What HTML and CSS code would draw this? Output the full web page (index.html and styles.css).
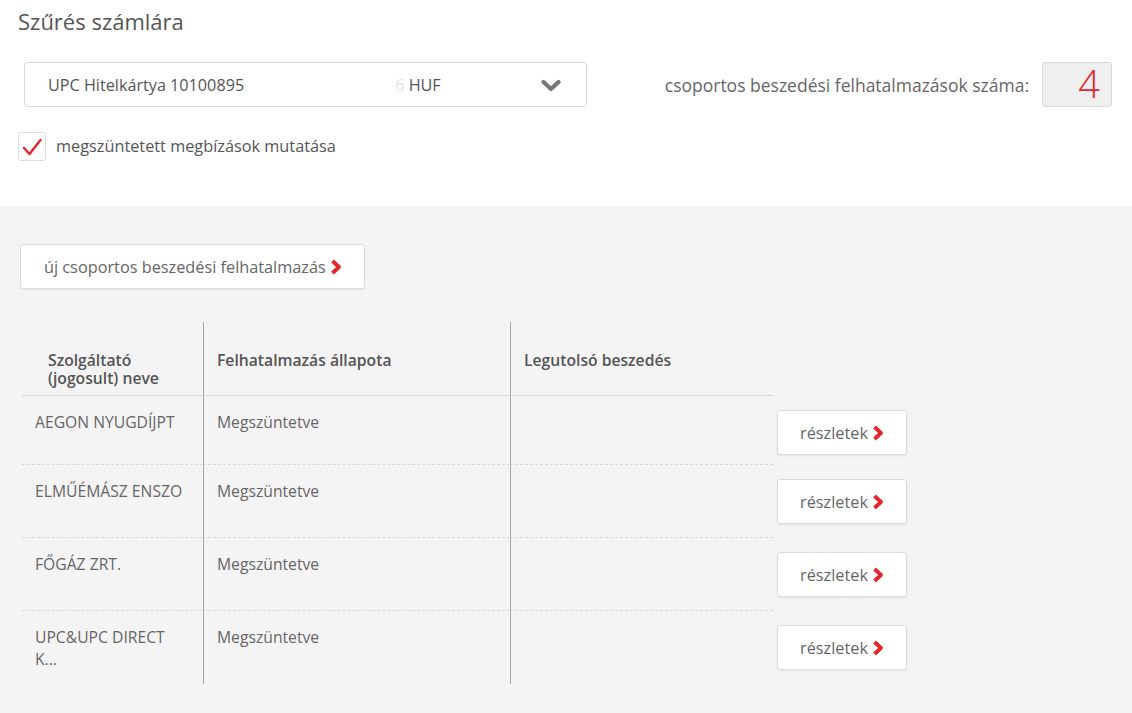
FILE: index.html
```html
<!DOCTYPE html>
<html lang="hu">

<head>
    <meta charset="UTF-8">
    <title>Csoportos beszedési felhatalmazások</title>
    <link rel="stylesheet" href="styles.css">
</head>

<body>
    <div class="filter">
        <h2>Szűrés számlára</h2>
        <div class="filter-row">
            <div class="account-select">
                <span class="account-text">UPC Hitelkártya 10100895<span class="masked"></span><span class="faint">6</span> HUF</span>
                <svg class="select-arrow" width="20" height="13" viewBox="0 0 20 13">
                    <path d="M2.5 3 L10 10 L17.5 3" fill="none" stroke="#777" stroke-width="4.2" stroke-linejoin="round" stroke-linecap="round" />
                </svg>
            </div>
            <div class="count">
                <span class="count-label">csoportos beszedési felhatalmazások száma:</span>
                <span class="count-box">4</span>
            </div>
        </div>
        <label class="check">
            <span class="check-box">
                <svg width="20" height="18" viewBox="0 0 20 18">
                    <path d="M2 10 L7.5 16 L18.5 2" fill="none" stroke="#e3262b" stroke-width="2.4" stroke-linecap="round" stroke-linejoin="round" />
                </svg>
            </span>
            megszüntetett megbízások mutatása
        </label>
    </div>

    <div class="main">
        <button class="btn btn-new">új csoportos beszedési felhatalmazás
            <svg class="chev" width="12" height="16" viewBox="0 0 12 16">
                <path d="M2.5 2 L9 8 L2.5 14" fill="none" stroke="#e3262b" stroke-width="3.8" stroke-linejoin="round" />
            </svg>
        </button>

        <table class="mandates">
            <colgroup>
                <col class="c-name">
                <col class="c-state">
                <col class="c-last">
                <col>
            </colgroup>
            <thead>
                <tr>
                    <th class="th-name">Szolgáltató (jogosult) neve</th>
                    <th>Felhatalmazás állapota</th>
                    <th>Legutolsó beszedés</th>
                    <th class="action"></th>
                </tr>
            </thead>
            <tbody id="rows"></tbody>
        </table>
    </div>

    <script>
        const mandates = [
            { name: "AEGON NYUGDÍJPT", state: "Megszüntetve", last: "" },
            { name: "ELMŰÉMÁSZ ENSZO", state: "Megszüntetve", last: "" },
            { name: "FŐGÁZ ZRT.", state: "Megszüntetve", last: "" },
            { name: "UPC&amp;UPC DIRECT<br>K...", state: "Megszüntetve", last: "" }
        ];

        const rows = document.getElementById("rows");
        mandates.forEach(item => {
            const tr = document.createElement("tr");
            tr.innerHTML = `
                <td>${item.name}</td>
                <td>${item.state}</td>
                <td>${item.last}</td>
                <td class="action">
                    <button class="btn btn-details">részletek
                        <svg class="chev" width="12" height="16" viewBox="0 0 12 16">
                            <path d="M2.5 2 L9 8 L2.5 14" fill="none" stroke="#e3262b" stroke-width="3.8" stroke-linejoin="round" />
                        </svg>
                    </button>
                </td>`;
            rows.appendChild(tr);
        });
    </script>
</body>

</html>
```

FILE: styles.css
```css
body {
    margin: 0;
    font-family: 'Open Sans', 'Noto Sans', sans-serif;
    color: #555;
    background-color: #f4f4f4;
}

.filter {
    background-color: #fff;
    padding: 6px 20px 45px 18px;
}

.filter h2 {
    margin: 0;
    font-size: 22px;
    font-weight: 400;
    line-height: 30px;
    color: #555;
}

.filter-row {
    display: flex;
    align-items: center;
    justify-content: space-between;
    margin-top: 26px;
}

.account-select {
    display: flex;
    align-items: center;
    justify-content: space-between;
    width: 563px;
    height: 45px;
    box-sizing: border-box;
    margin-left: 6px;
    padding: 0 25px 0 23px;
    border: 1px solid #d9d9d9;
    border-radius: 3px;
    font-size: 16.2px;
    color: #555;
}

.masked {
    display: inline-block;
    width: 151px;
}

.faint {
    color: #e4e4e4;
}

.select-arrow {
    margin-top: 1px;
}

.count {
    display: flex;
    align-items: center;
}

.count-label {
    font-size: 17.5px;
    color: #666;
    margin-right: 13px;
}

.count-box {
    display: flex;
    align-items: center;
    justify-content: flex-end;
    width: 70px;
    height: 45px;
    box-sizing: border-box;
    padding: 0 11px 3px 0;
    background-color: #efefef;
    border: 1px solid #d9d9d9;
    border-radius: 3px;
    font-size: 38px;
    font-weight: 300;
    color: #e3262b;
}

.check {
    display: flex;
    align-items: center;
    margin-top: 24px;
    font-size: 16.3px;
    line-height: 20px;
    color: #555;
}

.check-box {
    display: flex;
    align-items: center;
    justify-content: center;
    width: 28px;
    height: 29px;
    box-sizing: border-box;
    margin: 1px 10px 0 0;
    border: 1px solid #ddd;
    border-radius: 3px;
    background-color: #fff;
}

.main {
    padding: 38px 20px 30px;
}

.btn {
    display: inline-flex;
    align-items: center;
    height: 45px;
    box-sizing: border-box;
    background-color: #fff;
    border: 1px solid #dcdcdc;
    border-radius: 3px;
    box-shadow: 0 1px 2px rgba(0, 0, 0, 0.08);
    font-family: inherit;
    font-size: 16.3px;
    color: #666;
    cursor: pointer;
}

.btn .chev {
    margin-left: 4px;
}

.btn-new {
    padding: 0 22px 0 23px;
}

.btn-details {
    width: 130px;
    padding: 0 0 0 22px;
}

/* table */
.mandates {
    margin: 33px 0 0 2px;
    border-collapse: separate;
    border-spacing: 0;
    table-layout: fixed;
    width: 900px;
    font-size: 15.7px;
    color: #666;
}

.c-name {
    width: 181px;
}

.c-state {
    width: 307px;
}

.c-last {
    width: 263px;
}

.mandates th {
    text-align: left;
    vertical-align: top;
    font-weight: 600;
    color: #555;
    line-height: 18px;
    padding: 29px 12px 8px 13px;
    border-bottom: 1px solid #d8d8d8;
}

.mandates th.th-name {
    padding-left: 26px;
    padding-right: 14px;
}

.mandates td {
    vertical-align: top;
    line-height: 21.5px;
    padding: 16px 6px 0 13px;
    border-bottom: 1px dashed #dadada;
}

.mandates th:nth-child(2),
.mandates th:nth-child(3),
.mandates td:nth-child(2),
.mandates td:nth-child(3) {
    border-left: 1px solid #9fa9a7;
}

.mandates tbody tr:last-child td {
    border-bottom: none;
}

.mandates th.action,
.mandates td.action {
    border-bottom: none;
    padding: 14px 0 14px 4px;
}

.mandates tbody tr:first-child td.action {
    padding-bottom: 10px;
}
```
